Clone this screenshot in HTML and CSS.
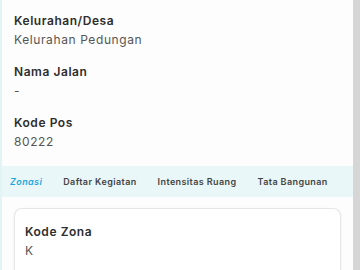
FILE: index.html
```html
<!DOCTYPE html>
<html lang="id">

<head>
    <meta charset="UTF-8">
    <title>Detail Lokasi</title>
    <link rel="stylesheet" href="styles.css">
</head>

<body>
    <div class="page">
        <div class="content">
            <div class="info">
                <div class="item">
                    <div class="label">Kelurahan/Desa</div>
                    <div class="value">Kelurahan Pedungan</div>
                </div>
                <div class="item">
                    <div class="label">Nama Jalan</div>
                    <div class="value">-</div>
                </div>
                <div class="item">
                    <div class="label">Kode Pos</div>
                    <div class="value">80222</div>
                </div>
            </div>

            <ul class="tabs">
                <li class="active">Zonasi</li>
                <li>Daftar Kegiatan</li>
                <li>Intensitas Ruang</li>
                <li>Tata Bangunan</li>
            </ul>

            <div class="card">
                <div class="label">Kode Zona</div>
                <div class="value">K</div>
            </div>
        </div>
        <div class="scrollbar"></div>
    </div>
</body>

</html>
```

FILE: styles.css
```css
* {
    margin: 0;
    padding: 0;
    box-sizing: border-box;
}

body {
    width: 360px;
    height: 270px;
    overflow: hidden;
    background: #fdfdfd;
    font-family: "Inter", "Noto Sans", sans-serif;
}

.page {
    display: flex;
    height: 270px;
}

.content {
    flex: 1;
    border-left: 2px solid #e3f4f4;
}

.scrollbar {
    width: 7px;
    background: #d6d6d6;
}

.info {
    padding: 12px 0 0 12px;
    display: flex;
    flex-direction: column;
    gap: 13px;
}

.label {
    font-size: 12px;
    font-weight: 600;
    letter-spacing: 0.55px;
    color: #2e2e2e;
    line-height: 18px;
}

.value {
    font-size: 12px;
    letter-spacing: 0.6px;
    color: #555;
    line-height: 20px;
}

.tabs {
    list-style: none;
    margin-top: 14px;
    height: 31px;
    display: flex;
    align-items: center;
    gap: 21px;
    padding-left: 8px;
    background: #eaf7f9;
    font-size: 9px;
    font-weight: 600;
    letter-spacing: 0.4px;
    color: #444;
}

.tabs .active {
    color: #1fa6dc;
    font-style: italic;
}

.card {
    margin: 11px 12px 0 12px;
    height: 62px;
    border: 1px solid #e6e6e6;
    border-bottom: none;
    border-radius: 8px 8px 0 0;
    background: #fff;
    box-shadow: 0 1px 3px rgba(0, 0, 0, 0.06);
    padding: 14px 10px;
}
```
